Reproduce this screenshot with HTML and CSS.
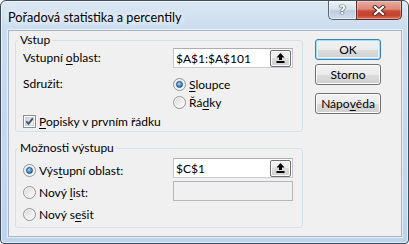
FILE: index.html
```html
<!DOCTYPE html>
<html lang="cs">
<head>
<meta charset="utf-8">
<title>Pořadová statistika a percentily</title>
<link rel="stylesheet" href="styles.css">
</head>
<body>
<div class="window">
  <div class="titlebar">
    <span class="title">Pořadová statistika a percentily</span>
    <div class="caption-btns">
      <div class="cap-help">?</div>
      <div class="cap-close">
        <svg width="14" height="11" viewBox="0 0 14 11"><path d="M3 2 L11 9 M11 2 L3 9" stroke="#4e2620" stroke-width="4" stroke-linecap="square" fill="none"/><path d="M3 2 L11 9 M11 2 L3 9" stroke="#fff" stroke-width="2.2" stroke-linecap="square" fill="none"/></svg>
      </div>
    </div>
  </div>
  <div class="frame">
    <div class="client">
      <div class="main">
        <fieldset class="group">
          <legend>Vstup</legend>
          <div class="grid grid-in">
            <span class="lbl">Vstupní <u>o</u>blast:</span>
            <div class="edit">
              <span class="val">$A$1:$A$101</span>
              <span class="collapse"><svg width="9" height="10" viewBox="0 0 9 10"><path d="M4.5 0 L8.5 4.5 H6 V7 H3 V4.5 H0.5 Z" fill="#000"/><rect x="0.5" y="8" width="8" height="2" fill="#000"/></svg></span>
            </div>
            <span class="lbl lbl-group">Sdružit:</span>
            <div class="radios">
              <div class="opt"><span class="radio on"></span><span><u>S</u>loupce</span></div>
              <div class="opt"><span class="radio"></span><span>Řá<u>d</u>ky</span></div>
            </div>
            <div class="opt chk-row">
              <svg class="chk" width="13" height="13" viewBox="0 0 13 13">
                <defs><linearGradient id="cg" x1="0" y1="0" x2="1" y2="1"><stop offset="0" stop-color="#c9ced4"/><stop offset="1" stop-color="#f7f7f7"/></linearGradient></defs>
                <rect x="0.5" y="0.5" width="12" height="12" fill="#fff" stroke="#8e8f8f"/>
                <rect x="2.5" y="2.5" width="8" height="8" fill="url(#cg)" stroke="#d0d4da"/>
                <path d="M3.3 6.4 L5.5 8.8 L9.8 3.4" fill="none" stroke="#3b4f7f" stroke-width="1.8"/>
              </svg>
              <span><u>P</u>opisky v prvním řádku</span>
            </div>
          </div>
        </fieldset>
        <fieldset class="group group-out">
          <legend>Možnosti výstupu</legend>
          <div class="grid grid-out">
            <div class="opt o1"><span class="radio on"></span><span>Výs<u>t</u>upní oblast:</span></div>
            <div class="edit">
              <span class="val">$C$1</span>
              <span class="collapse"><svg width="9" height="10" viewBox="0 0 9 10"><path d="M4.5 0 L8.5 4.5 H6 V7 H3 V4.5 H0.5 Z" fill="#000"/><rect x="0.5" y="8" width="8" height="2" fill="#000"/></svg></span>
            </div>
            <div class="opt o2"><span class="radio"></span><span>Nový <u>l</u>ist:</span></div>
            <div class="edit disabled"></div>
            <div class="opt o3"><span class="radio"></span><span>Nový s<u>e</u>šit</span></div>
          </div>
        </fieldset>
      </div>
      <div class="side">
        <button class="btn default">OK</button>
        <button class="btn b2">Storno</button>
        <button class="btn b3">Nápo<u>v</u>ěda</button>
      </div>
    </div>
  </div>
</div>
</body>
</html>
```

FILE: styles.css
```css
html, body {
  margin: 0;
  padding: 0;
  background: #fff;
}

body {
  font-family: "Lato", "DejaVu Sans", sans-serif;
  font-size: 12px;
  color: #000;
}

u {
  text-decoration: underline;
  text-decoration-thickness: 1px;
  text-underline-offset: 2px;
}

.window {
  width: 409px;
  height: 244px;
  box-sizing: border-box;
  border: 1px solid #3e4b58;
  border-radius: 6px 6px 4px 4px;
  background: linear-gradient(180deg, #dce7f3 0, #cadcef 28px, #bed4eb 100%);
  box-shadow: inset 0 0 0 1px rgba(255, 255, 255, 0.55);
  display: flex;
  flex-direction: column;
  overflow: hidden;
}

.titlebar {
  height: 29px;
  flex: none;
  display: flex;
  align-items: flex-start;
}

.title {
  margin-left: 7px;
  margin-top: 8px;
  font-size: 12.7px;
  line-height: 16px;
  text-shadow: 0 0 6px #fff, 0 0 8px #fff;
}

.caption-btns {
  margin-left: auto;
  margin-right: 6px;
  display: flex;
}

.cap-help {
  width: 28px;
  height: 19px;
  box-sizing: border-box;
  border: 1px solid #56636f;
  border-top: 0;
  border-right: 0;
  border-radius: 0 0 0 5px;
  background: linear-gradient(180deg, #eef3f8 0, #d6e1ec 45%, #bfcedd 55%, #cfdceb 100%);
  box-shadow: inset 0 0 0 1px rgba(255, 255, 255, 0.5);
  display: flex;
  align-items: center;
  justify-content: center;
  font-family: "DejaVu Sans", sans-serif;
  font-weight: bold;
  font-size: 12px;
  line-height: 1;
  color: #fff;
  text-shadow: 0 0 1px #3c4652, 0 0 1px #3c4652, 0 0 1px #3c4652;
}

.cap-close {
  width: 46px;
  height: 19px;
  box-sizing: border-box;
  border: 1px solid #5a2a26;
  border-top: 0;
  border-radius: 0 0 5px 0;
  background: linear-gradient(180deg, #e9ab9d 0, #dc8a7b 45%, #c84a36 55%, #c4412f 80%, #d9785f 100%);
  box-shadow: inset 0 0 0 1px rgba(255, 255, 255, 0.3);
  display: flex;
  align-items: center;
  justify-content: center;
}

.frame {
  flex: 1;
  display: flex;
  padding: 0 6px 6px 7px;
}

.client {
  flex: 1;
  display: flex;
  align-items: flex-start;
  background: #f0f0f0;
  border: 1px solid #a3b5c8;
  box-shadow: 0 0 0 1px rgba(255, 255, 255, 0.6);
}

.main {
  padding-left: 6px;
  margin-top: 1px;
  display: flex;
  flex-direction: column;
}

.group {
  width: 288px;
  box-sizing: border-box;
  margin: 0;
  padding: 0;
  border: 1px solid #d5dfe5;
  border-radius: 3px;
  min-width: 0;
}

.group legend {
  margin-left: 2px;
  padding: 0 2px;
  line-height: 16px;
}

.group-out {
  margin-top: 8px;
}

.grid {
  display: grid;
  grid-template-columns: 150px 120px;
  padding-left: 7px;
}

.grid-in {
  padding-bottom: 1px;
}

.grid-out {
  padding-top: 2px;
  padding-bottom: 3px;
}

.lbl {
  align-self: center;
  line-height: 16px;
}

.lbl-group {
  align-self: start;
  margin-top: 7px;
  line-height: 18px;
}

.edit {
  width: 120px;
  height: 20px;
  box-sizing: border-box;
  border: 1px solid;
  border-color: #abadb3 #c3c7cd #c9ccd2 #c3c7cd;
  background: #fff;
  display: flex;
  align-items: center;
  padding: 0 1px;
}

.edit.disabled {
  background: #f0f0f0;
  border-color: #b4b6ba;
  margin-top: 3px;
}

.val {
  padding-left: 1px;
}

.collapse {
  margin-left: auto;
  width: 21px;
  height: 17px;
  box-sizing: border-box;
  border: 1px solid #707070;
  border-radius: 2px;
  background: linear-gradient(180deg, #f2f2f2 0, #ebebeb 50%, #dddddd 50%, #cfcfcf 100%);
  box-shadow: inset 0 0 0 1px #fcfcfc;
  display: flex;
  align-items: center;
  justify-content: center;
}

.collapse svg {
  display: block;
}

.radios {
  margin-top: 7px;
  display: flex;
  flex-direction: column;
}

.opt {
  display: flex;
  align-items: center;
  gap: 3px;
  height: 18px;
}

.chk-row {
  grid-column: 1 / -1;
  margin-top: 1px;
}

.chk {
  display: block;
  flex: none;
}

.radio {
  width: 13px;
  height: 13px;
  box-sizing: border-box;
  flex: none;
  border-radius: 50%;
  border: 1px solid #959595;
  background: linear-gradient(135deg, #d4d4d4 0, #eeeeee 55%, #fbfbfb 100%);
  box-shadow: inset 0 0 0 1px #f6f6f6;
  display: flex;
  align-items: center;
  justify-content: center;
}

.radio.on::after {
  content: "";
  width: 7px;
  height: 7px;
  box-sizing: border-box;
  border-radius: 50%;
  border: 1px solid #1e4d7e;
  background: radial-gradient(circle at 40% 35%, #b2e2f9 0, #4a9ad6 45%, #1e5d99 100%);
}

.o1 {
  align-self: start;
  height: 16px;
  margin-top: 4px;
}

.o2 {
  align-self: start;
  height: 16px;
  margin-top: 6px;
}

.o3 {
  margin-top: 3px;
  height: 20px;
}

.side {
  margin-left: 12px;
  padding-top: 8px;
  display: flex;
  flex-direction: column;
}

.btn {
  width: 66px;
  height: 21px;
  box-sizing: border-box;
  margin: 0;
  padding: 0;
  border: 1px solid #707070;
  border-radius: 3px;
  background: linear-gradient(180deg, #f2f2f2 0, #ebebeb 50%, #dddddd 50%, #cfcfcf 100%);
  box-shadow: inset 0 0 0 1px #fcfcfc;
  font: inherit;
  color: #000;
  line-height: 16px;
  display: flex;
  align-items: center;
  justify-content: center;
}

.btn.default {
  border-color: #3c7fb1;
  box-shadow: inset 0 0 0 1px #9fe0f8, inset 0 0 0 2px #e4f5fc;
}

.b2 {
  margin-top: 4px;
}

.b3 {
  margin-top: 8px;
}
```
